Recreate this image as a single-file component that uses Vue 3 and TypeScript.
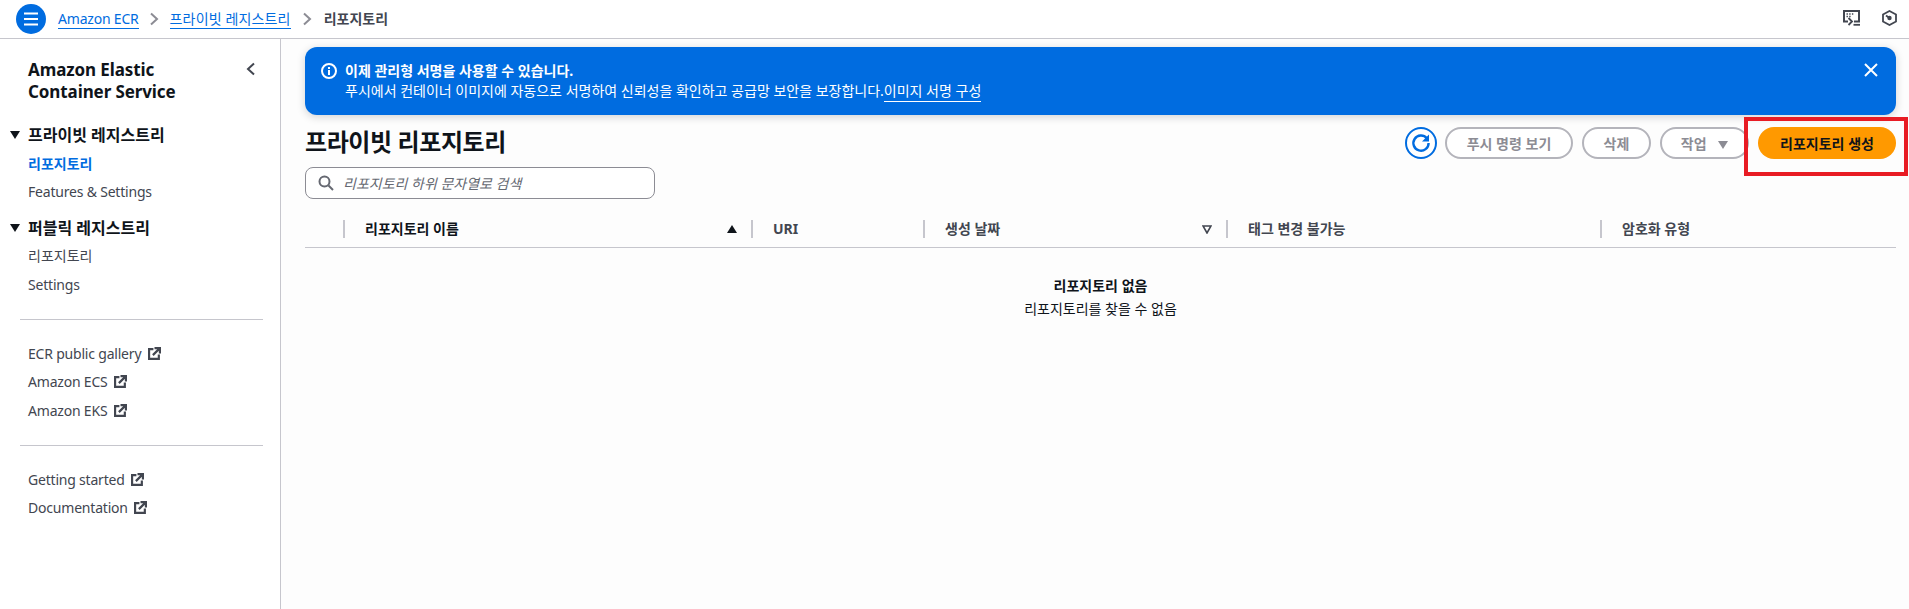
<script setup lang="ts">
interface Col { label: string; strong?: boolean; sort?: 'up' | 'down' }
const columns: Col[] = [
  { label: '리포지토리 이름', strong: true, sort: 'up' },
  { label: 'URI' },
  { label: '생성 날짜', sort: 'down' },
  { label: '태그 변경 불가능' },
  { label: '암호화 유형' },
]
const links1 = ['ECR public gallery', 'Amazon ECS', 'Amazon EKS']
const links2 = ['Getting started', 'Documentation']
</script>

<template>
  <div class="page">
    <header class="topbar">
      <button class="menu" aria-label="menu">
        <svg width="16" height="14" viewBox="0 0 16 14"><path d="M1 1.5h14M1 7h14M1 12.5h14" stroke="#fff" stroke-width="2" fill="none"/></svg>
      </button>
      <nav class="crumbs">
        <a class="crumb latin">Amazon ECR</a>
        <svg class="sep" width="10" height="14" viewBox="0 0 10 14"><path d="M2 1.5 8 7l-6 5.5" stroke="#8c8c94" stroke-width="2" fill="none"/></svg>
        <a class="crumb wide">프라이빗 레지스트리</a>
        <svg class="sep" width="10" height="14" viewBox="0 0 10 14"><path d="M2 1.5 8 7l-6 5.5" stroke="#8c8c94" stroke-width="2" fill="none"/></svg>
        <span class="crumb-current">리포지토리</span>
      </nav>
      <div class="top-icons">
        <svg width="17" height="16" viewBox="0 0 17 16" fill="none">
          <path d="M5 11.5H1V1h15v10.5h-5" stroke="#424650" stroke-width="2"/>
          <path d="M3.5 4h1.4M6.2 4h1.4M8.9 4h1.4M3.5 6.5h1.4M6.2 6.5h1.4" stroke="#424650" stroke-width="1.5"/>
          <path d="m5.5 8 3.5 3.5-3.5 3.5" stroke="#424650" stroke-width="1.8"/>
          <path d="M10.5 14.8H17" stroke="#424650" stroke-width="1.8"/>
        </svg>
        <svg width="15" height="16" viewBox="0 0 15 16" fill="none">
          <path d="M7.5 1 14 4.5v7L7.5 15 1 11.5v-7z" stroke="#424650" stroke-width="1.8"/>
          <circle cx="7.5" cy="8" r="2.2" fill="#424650"/>
          <path d="M4 5.5 7.5 8" stroke="#424650" stroke-width="1.8"/>
        </svg>
      </div>
    </header>

    <div class="body">
      <aside class="side">
        <div class="side-head">
          <h2>Amazon Elastic<br />Container Service</h2>
          <svg width="10" height="14" viewBox="0 0 10 14"><path d="M8 1.5 2 7l6 5.5" stroke="#424650" stroke-width="2" fill="none"/></svg>
        </div>
        <div class="sec"><i class="tri"></i>프라이빗 레지스트리</div>
        <a class="item active">리포지토리</a>
        <a class="item latin">Features &amp; Settings</a>
        <div class="sec sec2"><i class="tri"></i>퍼블릭 레지스트리</div>
        <a class="item">리포지토리</a>
        <a class="item latin">Settings</a>
        <hr />
        <a v-for="l in links1" :key="l" class="item latin">{{ l }}
          <svg class="ext" width="13" height="13" viewBox="0 0 12 12" fill="none"><path d="M5 2H1v9h9V7" stroke="#424650" stroke-width="2"/><path d="M4.5 7.5 10.5 1.5M6 1h5v5" stroke="#424650" stroke-width="2"/></svg>
        </a>
        <hr />
        <a v-for="l in links2" :key="l" class="item latin">{{ l }}
          <svg class="ext" width="13" height="13" viewBox="0 0 12 12" fill="none"><path d="M5 2H1v9h9V7" stroke="#424650" stroke-width="2"/><path d="M4.5 7.5 10.5 1.5M6 1h5v5" stroke="#424650" stroke-width="2"/></svg>
        </a>
      </aside>

      <main class="main">
        <section class="flash">
          <svg class="info" width="16" height="16" viewBox="0 0 16 16" fill="none"><circle cx="8" cy="8" r="7" stroke="#fff" stroke-width="2"/><path d="M8 7v5M8 4v2" stroke="#fff" stroke-width="2"/></svg>
          <div class="flash-text">
            <strong>이제 관리형 서명을 사용할 수 있습니다.</strong>
            <p>푸시에서 컨테이너 이미지에 자동으로 서명하여 신뢰성을 확인하고 공급망 보안을 보장합니다.<a>이미지 서명 구성</a></p>
          </div>
          <svg class="close" width="14" height="14" viewBox="0 0 14 14"><path d="m1 1 12 12M13 1 1 13" stroke="#fff" stroke-width="2" fill="none"/></svg>
        </section>

        <div class="head">
          <div class="head-left">
            <h1>프라이빗 리포지토리</h1>
            <label class="search">
              <svg width="16" height="16" viewBox="0 0 16 16" fill="none"><circle cx="6.5" cy="6.5" r="5" stroke="#656871" stroke-width="2"/><path d="m10.5 10.5 4.5 4.5" stroke="#656871" stroke-width="2"/></svg>
              <span>리포지토리 하위 문자열로 검색</span>
            </label>
          </div>
          <div class="actions">
            <button class="refresh" aria-label="refresh">
              <svg width="20" height="20" viewBox="0 0 20 20" fill="none"><path d="M15.8 5.2A7.6 7.6 0 1 0 17.6 10" stroke="#006ce0" stroke-width="2.4"/><path d="M18 1.5v7h-7z" fill="#006ce0"/></svg>
            </button>
            <button class="btn w-push">푸시 명령 보기</button>
            <button class="btn w-del">삭제</button>
            <button class="btn w-act">작업 <i class="caret"></i></button>
            <button class="primary">리포지토리 생성</button>
          </div>
          <div class="mark"></div>
        </div>

        <div class="table-head">
          <div class="cell first"></div>
          <div v-for="c in columns" :key="c.label" class="cell" :class="{ strong: c.strong }">
            <span>{{ c.label }}</span>
            <svg v-if="c.sort === 'up'" width="10" height="8" viewBox="0 0 10 8"><path d="M5 0l5 8H0z" fill="#0f141a"/></svg>
            <svg v-if="c.sort === 'down'" width="10" height="9" viewBox="0 0 10 9" fill="none"><path d="M1 1h8L5 8z" stroke="#424650" stroke-width="1.6"/></svg>
          </div>
        </div>
        <div class="empty">
          <strong>리포지토리 없음</strong>
          <p>리포지토리를 찾을 수 없음</p>
        </div>
      </main>
    </div>
  </div>
</template>

<style>
html, body { margin: 0; background: #fff; }
</style>

<style scoped>
.page {
  width: 1909px; height: 609px; overflow: hidden; display: flex; flex-direction: column;
  font-family: "Noto Sans", "Noto Sans CJK KR", sans-serif; font-size: 14px; color: #0f141a;
}
.latin { letter-spacing: -0.2px; }
.topbar {
  height: 38px; flex: none; display: flex; align-items: center; padding: 0 12px 0 16px;
  border-bottom: 1px solid #c6c6cd; background: #fff;
}
.menu {
  width: 30px; height: 30px; border-radius: 50%; border: 0; padding: 0; background: #006ce0;
  display: flex; align-items: center; justify-content: center; flex: none;
}
.crumbs { display: flex; align-items: center; margin-left: 12px; line-height: 20px; }
.crumb { color: #006ce0; border-bottom: 1px solid #006ce0; line-height: 18px; }
.crumb.wide { letter-spacing: 0.15px; }
.crumb-current { color: #424650; font-weight: 700; }
.sep { margin: 0 11px 0 10px; }
.crumb.wide + .sep { margin: 0 12px 0 11px; }
.top-icons { margin-left: auto; display: flex; align-items: center; gap: 22px; margin-top: -3px; }

.body { flex: 1; display: flex; min-height: 0; }
.side {
  width: 281px; flex: none; box-sizing: border-box; border-right: 1px solid #c6c6cd; background: #fff;
  padding: 20px 24px 0 28px; display: flex; flex-direction: column; align-items: flex-start;
}
.side-head { width: 100%; display: flex; justify-content: space-between; align-items: flex-start; }
.side-head h2 { margin: 0; font-size: 17px; line-height: 22px; font-weight: 700; letter-spacing: -0.1px; }
.side-head svg { margin: 3px 0 0; }
.sec {
  position: relative; font-size: 16px; font-weight: 700; line-height: 22px; margin-top: 21px; margin-bottom: 8px;
}
.sec2 { margin-top: 7px; margin-bottom: 7px; }
.tri {
  position: absolute; left: -18px; top: 7px; width: 0; height: 0;
  border-left: 5px solid transparent; border-right: 5px solid transparent; border-top: 8px solid #0f141a;
}
.item { line-height: 20px; margin-bottom: 8.5px; color: #424650; display: block; white-space: nowrap; }
.item.active { color: #006ce0; font-weight: 700; margin-bottom: 7.5px; }
.ext { margin-left: 3px; vertical-align: -1px; }
hr {
  align-self: stretch; margin: 15.5px -7px 24px -8px; border: 0; border-top: 1px solid #c6c6cd;
}

.main { flex: 1; min-width: 0; background: #fdfdfd; padding: 8px 13px 0 24px; }
.flash {
  height: 68px; box-sizing: border-box; border-radius: 12px; background: #006ce0; color: #fff;
  display: flex; align-items: flex-start; padding: 14px 18px 0 16px; box-shadow: 0 2px 8px rgba(15,20,26,.18);
}
.info { margin: 2px 8px 0 0; flex: none; }
.flash-text { flex: 1; line-height: 20px; }
.flash-text strong { display: block; font-weight: 700; }
.flash-text p { margin: 0; }
.flash-text a { border-bottom: 1px solid #fff; padding-bottom: 1px; }
.close { margin: 2px 0 0; flex: none; }

.head { position: relative; display: flex; justify-content: space-between; padding-top: 12px; }
.head-left { display: flex; flex-direction: column; }
h1 { margin: 0; font-size: 24px; line-height: 30px; font-weight: 700; letter-spacing: -0.4px; }
.search {
  margin-top: 10px; width: 350px; height: 32px; box-sizing: border-box; border: 1px solid #8c8c94; border-radius: 8px;
  background: #fff; display: flex; align-items: center; padding-left: 12px; gap: 9px;
  font-style: italic; color: #656871;
}
.actions { display: flex; align-items: flex-start; }
.refresh {
  width: 32px; height: 32px; border-radius: 50%; border: 2px solid #006ce0; background: #fff; padding: 0;
  display: flex; align-items: center; justify-content: center; margin-right: 8px;
}
.btn {
  height: 32px; box-sizing: border-box; border: 2px solid #b4b4bb; border-radius: 16px; background: #fff;
  color: #8c8c94; font: 700 14px "Noto Sans", "Noto Sans CJK KR", sans-serif; padding: 0; margin-right: 9px;
}
.w-push { width: 128px; }
.w-del { width: 69px; }
.w-act { width: 89px; }
.caret {
  display: inline-block; margin-left: 8px; width: 0; height: 0; vertical-align: 0;
  border-left: 5px solid transparent; border-right: 5px solid transparent; border-top: 8px solid #8c8c94;
}
.primary {
  width: 138px; height: 32px; border: 0; border-radius: 16px; background: #ff9900; color: #0f141a;
  font: 700 14px "Noto Sans", "Noto Sans CJK KR", sans-serif; padding: 0;
}
.mark {
  position: absolute; right: -12px; top: 2px; width: 164px; height: 59px; box-sizing: border-box;
  border: 4px solid #e81c24; pointer-events: none;
}

.table-head {
  margin-top: 21px; height: 28px; box-sizing: border-box; border-bottom: 1px solid #c6c6cd;
  display: grid; grid-template-columns: 38px 408px 172px 303px 374px 1fr; align-items: flex-start;
  font-weight: 700; color: #424650;
}
.cell {
  height: 18px; display: flex; align-items: center; justify-content: space-between; padding: 0 14px 0 20px;
  border-left: 2px solid #c6c6cd; box-sizing: border-box; line-height: 18px; white-space: nowrap;
}
.cell.first { border-left: 0; }
.cell.strong { color: #0f141a; }
.empty { text-align: center; margin-top: 28px; line-height: 20px; }
.empty strong { display: block; font-weight: 700; }
.empty p { margin: 3px 0 0; }
</style>
